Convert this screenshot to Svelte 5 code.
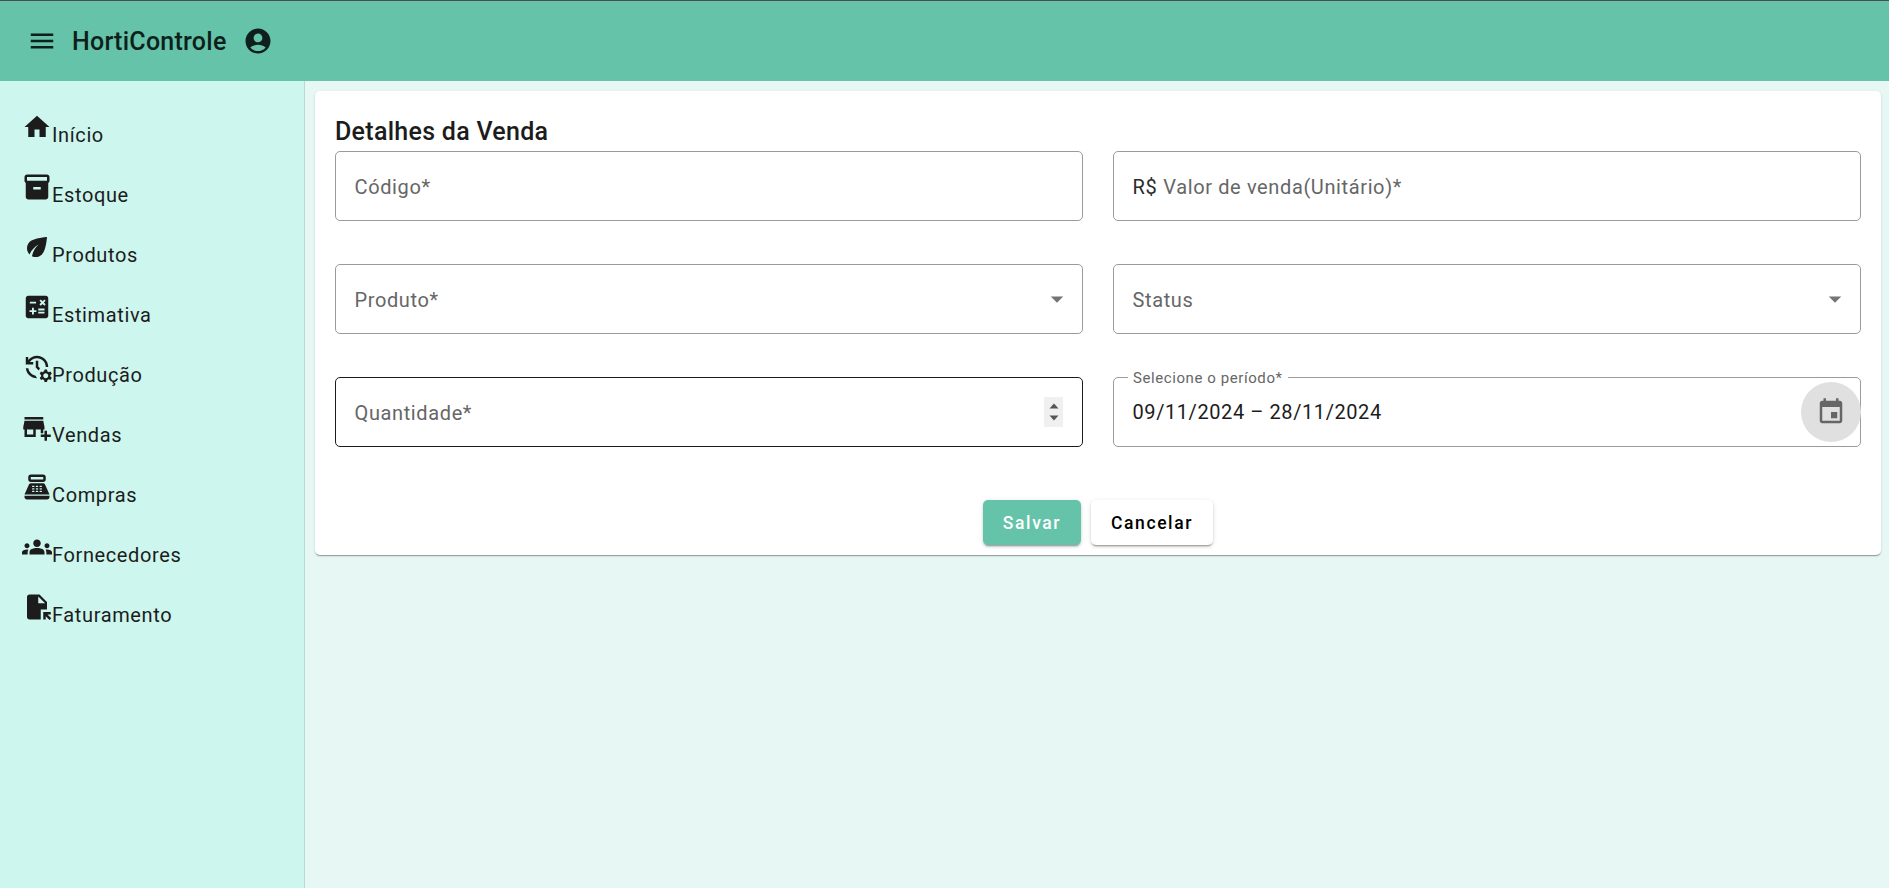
<script>
	const icons = {
		home: 'M10 20v-6h4v6h5v-8h3L12 3 2 12h3v8z',
		box: 'M20 2H4c-1 0-2 .9-2 2v3.01c0 .72.43 1.34 1 1.69V20c0 1.1 1.1 2 2 2h14c.9 0 2-.9 2-2V8.7c.57-.35 1-.97 1-1.69V4c0-1.1-1-2-2-2m-5 12H9v-2h6zm5-7H4V4l16-.02z',
		eco: 'M6.05 8.05c-2.73 2.73-2.73 7.15-.02 9.88 1.47-3.4 4.09-6.24 7.36-7.93-2.77 2.34-4.71 5.61-5.39 9.32 2.6 1.23 5.8.78 7.95-1.37C19.43 14.47 20 4 20 4S9.53 4.57 6.05 8.05',
		calc: 'M19 3H5c-1.1 0-2 .9-2 2v14c0 1.1.9 2 2 2h14c1.1 0 2-.9 2-2V5c0-1.1-.9-2-2-2m-5.03 4.06 1.06-1.06 1.41 1.41L17.85 6l1.06 1.06-1.41 1.41 1.41 1.42-1.06 1.06-1.41-1.41-1.41 1.41-1.06-1.06 1.41-1.42zM6.25 7.72h5v1.5h-5zM11.5 16h-2v2H8v-2H6v-1.5h2v-2h1.5v2h2zm6.5 1.25h-5v-1.5h5zm0-2.5h-5v-1.5h5z',
		history: 'M22.69 18.37l1.14-1-1-1.73-1.45.49c-.32-.27-.68-.48-1.08-.63L20 14h-2l-.3 1.49c-.4.15-.76.36-1.08.63l-1.45-.49-1 1.73 1.14 1c-.08.5-.08.76 0 1.26l-1.14 1 1 1.73 1.45-.49c.32.27.68.48 1.08.63L18 24h2l.3-1.49c.4-.15.76-.36 1.08-.63l1.45.49 1-1.73-1.14-1c.08-.51.08-.77 0-1.27zM19 21c-1.1 0-2-.9-2-2s.9-2 2-2 2 .9 2 2-.9 2-2 2zM11 7v5.41l2.36 2.36 1.04-1.79-1.4-1.39V7h-2zm10 5c0-4.97-4.03-9-9-9-2.83 0-5.35 1.32-7 3.36V4H3v6h6V8H6.26C7.53 6.19 9.63 5 12 5c3.86 0 7 3.14 7 7h2zm-10.14 6.91c-2.99-.49-5.35-2.9-5.78-5.91H3.06c.5 4.5 4.24 8 8.94 8h.07l-1.21-2.09z',
		store: 'M15 17h2v-3h1v-2l-1-5H2l-1 5v2h1v6h9v-6h4v3zm-6 1H4v-4h5v4zM2 4h15v2H2zM20 18v-3h-2v3h-3v2h3v3h2v-3h3v-2z',
		pos: 'M17 2H7c-1.1 0-2 .9-2 2v2c0 1.1.9 2 2 2h10c1.1 0 2-.9 2-2V4c0-1.1-.9-2-2-2zm0 4H7V4h10v2zm3 16H4c-1.1 0-2-.9-2-2v-1h20v1c0 1.1-.9 2-2 2zm-1.47-11.81C18.21 9.47 17.49 9 16.7 9H7.3c-.79 0-1.51.47-1.83 1.19L2 18h20l-3.47-7.81zM9.5 16h-1c-.28 0-.5-.22-.5-.5s.22-.5.5-.5h1c.28 0 .5.22.5.5s-.22.5-.5.5zm0-2h-1c-.28 0-.5-.22-.5-.5s.22-.5.5-.5h1c.28 0 .5.22.5.5s-.22.5-.5.5zm0-2h-1c-.28 0-.5-.22-.5-.5s.22-.5.5-.5h1c.28 0 .5.22.5.5s-.22.5-.5.5zm3 4h-1c-.28 0-.5-.22-.5-.5s.22-.5.5-.5h1c.28 0 .5.22.5.5s-.22.5-.5.5zm0-2h-1c-.28 0-.5-.22-.5-.5s.22-.5.5-.5h1c.28 0 .5.22.5.5s-.22.5-.5.5zm0-2h-1c-.28 0-.5-.22-.5-.5s.22-.5.5-.5h1c.28 0 .5.22.5.5s-.22.5-.5.5zm3 4h-1c-.28 0-.5-.22-.5-.5s.22-.5.5-.5h1c.28 0 .5.22.5.5s-.22.5-.5.5zm0-2h-1c-.28 0-.5-.22-.5-.5s.22-.5.5-.5h1c.28 0 .5.22.5.5s-.22.5-.5.5zm0-2h-1c-.28 0-.5-.22-.5-.5s.22-.5.5-.5h1c.28 0 .5.22.5.5s-.22.5-.5.5z',
		groups: 'M12 12.75c1.63 0 3.07.39 4.24.9 1.08.48 1.76 1.56 1.76 2.73V18H6v-1.61c0-1.18.68-2.26 1.76-2.73 1.17-.52 2.61-.91 4.24-.91zM4 13c1.1 0 2-.9 2-2s-.9-2-2-2-2 .9-2 2 .9 2 2 2zm1.13 1.1c-.37-.06-.74-.1-1.13-.1-.99 0-1.93.21-2.78.58C.48 14.9 0 15.62 0 16.43V18h4.5v-1.61c0-.83.23-1.61.63-2.29zM20 13c1.1 0 2-.9 2-2s-.9-2-2-2-2 .9-2 2 .9 2 2 2zm4 3.43c0-.81-.48-1.53-1.22-1.85-.85-.37-1.79-.58-2.78-.58-.39 0-.76.04-1.13.1.4.68.63 1.46.63 2.29V18H24v-1.57zM12 6c1.66 0 3 1.34 3 3s-1.34 3-3 3-3-1.34-3-3 1.34-3 3-3z',
		file: 'M14 2H6c-1.1 0-2 .9-2 2v16c0 1.1.89 2 1.99 2H15v-8h5V8l-6-6zm-1 7V3.5L18.5 9H13zM17 16h6v2h-2.6l3 3-1.4 1.4-3-3V22h-2z'
	};

	const menu = [
		{ label: 'Início', icon: icons.home },
		{ label: 'Estoque', icon: icons.box },
		{ label: 'Produtos', icon: icons.eco },
		{ label: 'Estimativa', icon: icons.calc },
		{ label: 'Produção', icon: icons.history },
		{ label: 'Vendas', icon: icons.store },
		{ label: 'Compras', icon: icons.pos },
		{ label: 'Fornecedores', icon: icons.groups },
		{ label: 'Faturamento', icon: icons.file }
	];
</script>

<div class="page">
	<header>
		<svg class="burger" viewBox="0 0 24 24"><path d="M3 18h18v-2H3v2zm0-5h18v-2H3v2zm0-7v2h18V6H3z" /></svg>
		<h1>HortiControle</h1>
		<svg class="account" viewBox="0 0 24 24"><path d="M12 2C6.48 2 2 6.48 2 12s4.48 10 10 10 10-4.48 10-10S17.52 2 12 2zm0 4c1.93 0 3.5 1.57 3.5 3.5S13.93 13 12 13s-3.5-1.57-3.5-3.5S10.07 6 12 6zm0 14c-2.03 0-4.43-.82-6.14-2.88C7.55 15.8 9.68 15 12 15s4.45.8 6.14 2.12C16.43 19.18 14.03 20 12 20z" /></svg>
	</header>

	<div class="body">
		<nav>
			{#each menu as item}
				<a href="#top" class="item"><svg viewBox="0 0 24 24"><path d={item.icon} /></svg>{item.label}</a>
			{/each}
		</nav>

		<main>
			<section class="card">
				<h2>Detalhes da Venda</h2>
				<div class="form">
					<div class="field"><span class="label">Código*</span></div>
					<div class="field"><span class="prefix">R$</span><span class="label">Valor de venda(Unitário)*</span></div>

					<div class="field">
						<span class="label">Produto*</span>
						<svg class="caret" viewBox="0 0 24 24"><path d="M7 10l5 5 5-5z" /></svg>
					</div>
					<div class="field">
						<span class="label">Status</span>
						<svg class="caret" viewBox="0 0 24 24"><path d="M7 10l5 5 5-5z" /></svg>
					</div>

					<div class="field focused">
						<span class="label">Quantidade*</span>
						<span class="spinner">
							<svg viewBox="0 0 10 6"><path d="M5 0.5 9.5 5.5H0.5z" /></svg>
							<svg viewBox="0 0 10 6"><path d="M0.5 0.5H9.5L5 5.5z" /></svg>
						</span>
					</div>
					<div class="field date">
						<span class="legend">Selecione o período*</span>
						<span class="value">09/11/2024 – 28/11/2024</span>
						<span class="picker">
							<svg viewBox="0 0 24 24"><path d="M17 12h-5v5h5v-5zM16 1v2H8V1H6v2H5c-1.11 0-1.99.9-1.99 2L3 19c0 1.1.89 2 2 2h14c1.1 0 2-.9 2-2V5c0-1.1-.9-2-2-2h-1V1h-2zm3 18H5V8h14v11z" /></svg>
						</span>
					</div>
				</div>
				<div class="actions">
					<button class="save">Salvar</button>
					<button class="cancel">Cancelar</button>
				</div>
			</section>
		</main>
	</div>
</div>

<style>
	:global(body) {
		margin: 0;
		font-family: Roboto, "Liberation Sans", sans-serif;
		color: #1c1c1c;
	}

	.page {
		height: 888px;
		display: flex;
		flex-direction: column;
		overflow: hidden;
	}

	header {
		height: 80px;
		flex: none;
		display: flex;
		align-items: center;
		background: #64c3a8;
		border-top: 1px solid #4a4f4e;
		color: #0f1f1b;
	}

	header svg {
		fill: currentColor;
		width: 30px;
		height: 30px;
	}

	.burger {
		margin-left: 27px;
	}

	h1 {
		margin: 0 0 0 15px;
		font-size: 25px;
		font-weight: 500;
		letter-spacing: 0.25px;
	}

	.account {
		margin-left: 16px;
	}

	.body {
		flex: 1;
		display: flex;
		min-height: 0;
	}

	nav {
		width: 305px;
		flex: none;
		border-right: 1px solid #b4dcd3;
		background: #cdf6ee;
		padding: 31px 0 0 22px;
		box-sizing: border-box;
	}

	.item {
		display: block;
		height: 60px;
		line-height: 36px;
		font-size: 20px;
		letter-spacing: 0.62px;
		color: #1c1c1c;
		text-decoration: none;
		white-space: nowrap;
	}

	.item svg {
		width: 30px;
		height: 30px;
		fill: #1c1c1c;
		vertical-align: baseline;
	}

	main {
		flex: 1;
		background: #e7f8f4;
		padding: 10px 8px 0 10px;
	}

	.card {
		background: #fff;
		border-radius: 5px;
		padding: 20px 20px 10px;
		box-shadow: 0 2px 1px -1px rgba(0, 0, 0, 0.2), 0 1px 1px 0 rgba(0, 0, 0, 0.14), 0 1px 3px 0 rgba(0, 0, 0, 0.12);
	}

	h2 {
		margin: 0;
		height: 40px;
		line-height: 42px;
		font-size: 25px;
		font-weight: 500;
		letter-spacing: 0.28px;
	}

	.form {
		display: grid;
		grid-template-columns: 1fr 1fr;
		column-gap: 30px;
		row-gap: 43px;
	}

	.field {
		position: relative;
		height: 70px;
		box-sizing: border-box;
		border: 1px solid #9b9b9b;
		border-radius: 5px;
		padding: 0 18.5px;
		display: flex;
		align-items: center;
		font-size: 20px;
		letter-spacing: 0.62px;
	}

	.focused {
		border-color: #1c1c1c;
	}

	.label {
		color: #666;
		margin-top: 1px;
	}

	.prefix {
		color: #2b2b2b;
		margin-top: 1px;
		margin-right: 6px;
	}

	.caret {
		width: 30px;
		height: 30px;
		margin-left: auto;
		margin-right: -8.5px;
		fill: #757575;
	}

	.spinner {
		width: 19px;
		height: 30px;
		margin-left: auto;
		margin-right: 0.5px;
		background: #f0f0f0;
		display: flex;
		flex-direction: column;
		align-items: center;
		justify-content: center;
		gap: 6px;
	}

	.spinner svg {
		width: 10px;
		height: 6px;
		fill: #555;
	}

	.legend {
		position: absolute;
		left: 14px;
		top: -10px;
		padding: 0 5px;
		background: #fff;
		color: #666;
		font-size: 15px;
		line-height: 20px;
		letter-spacing: 0.58px;
	}

	.value {
		color: #1c1c1c;
		letter-spacing: 0.58px;
	}

	.picker {
		width: 60px;
		height: 60px;
		border-radius: 50%;
		background: #e0e0e0;
		margin-left: auto;
		margin-right: -19px;
		display: flex;
		align-items: center;
		justify-content: center;
	}

	.picker svg {
		width: 30px;
		height: 30px;
		fill: #666;
	}

	.actions {
		display: flex;
		justify-content: center;
		gap: 10px;
		margin-top: 53px;
	}

	button {
		height: 45px;
		border: 0;
		border-radius: 5px;
		font-family: inherit;
		font-size: 17.5px;
		font-weight: 500;
		letter-spacing: 1.6px;
		box-shadow: 0 3px 1px -2px rgba(0, 0, 0, 0.2), 0 2px 2px 0 rgba(0, 0, 0, 0.14), 0 1px 5px 0 rgba(0, 0, 0, 0.12);
	}

	.save {
		width: 98px;
		background: #64c3a8;
		color: #fff;
	}

	.cancel {
		width: 122px;
		background: #fff;
		color: #000;
	}
</style>
